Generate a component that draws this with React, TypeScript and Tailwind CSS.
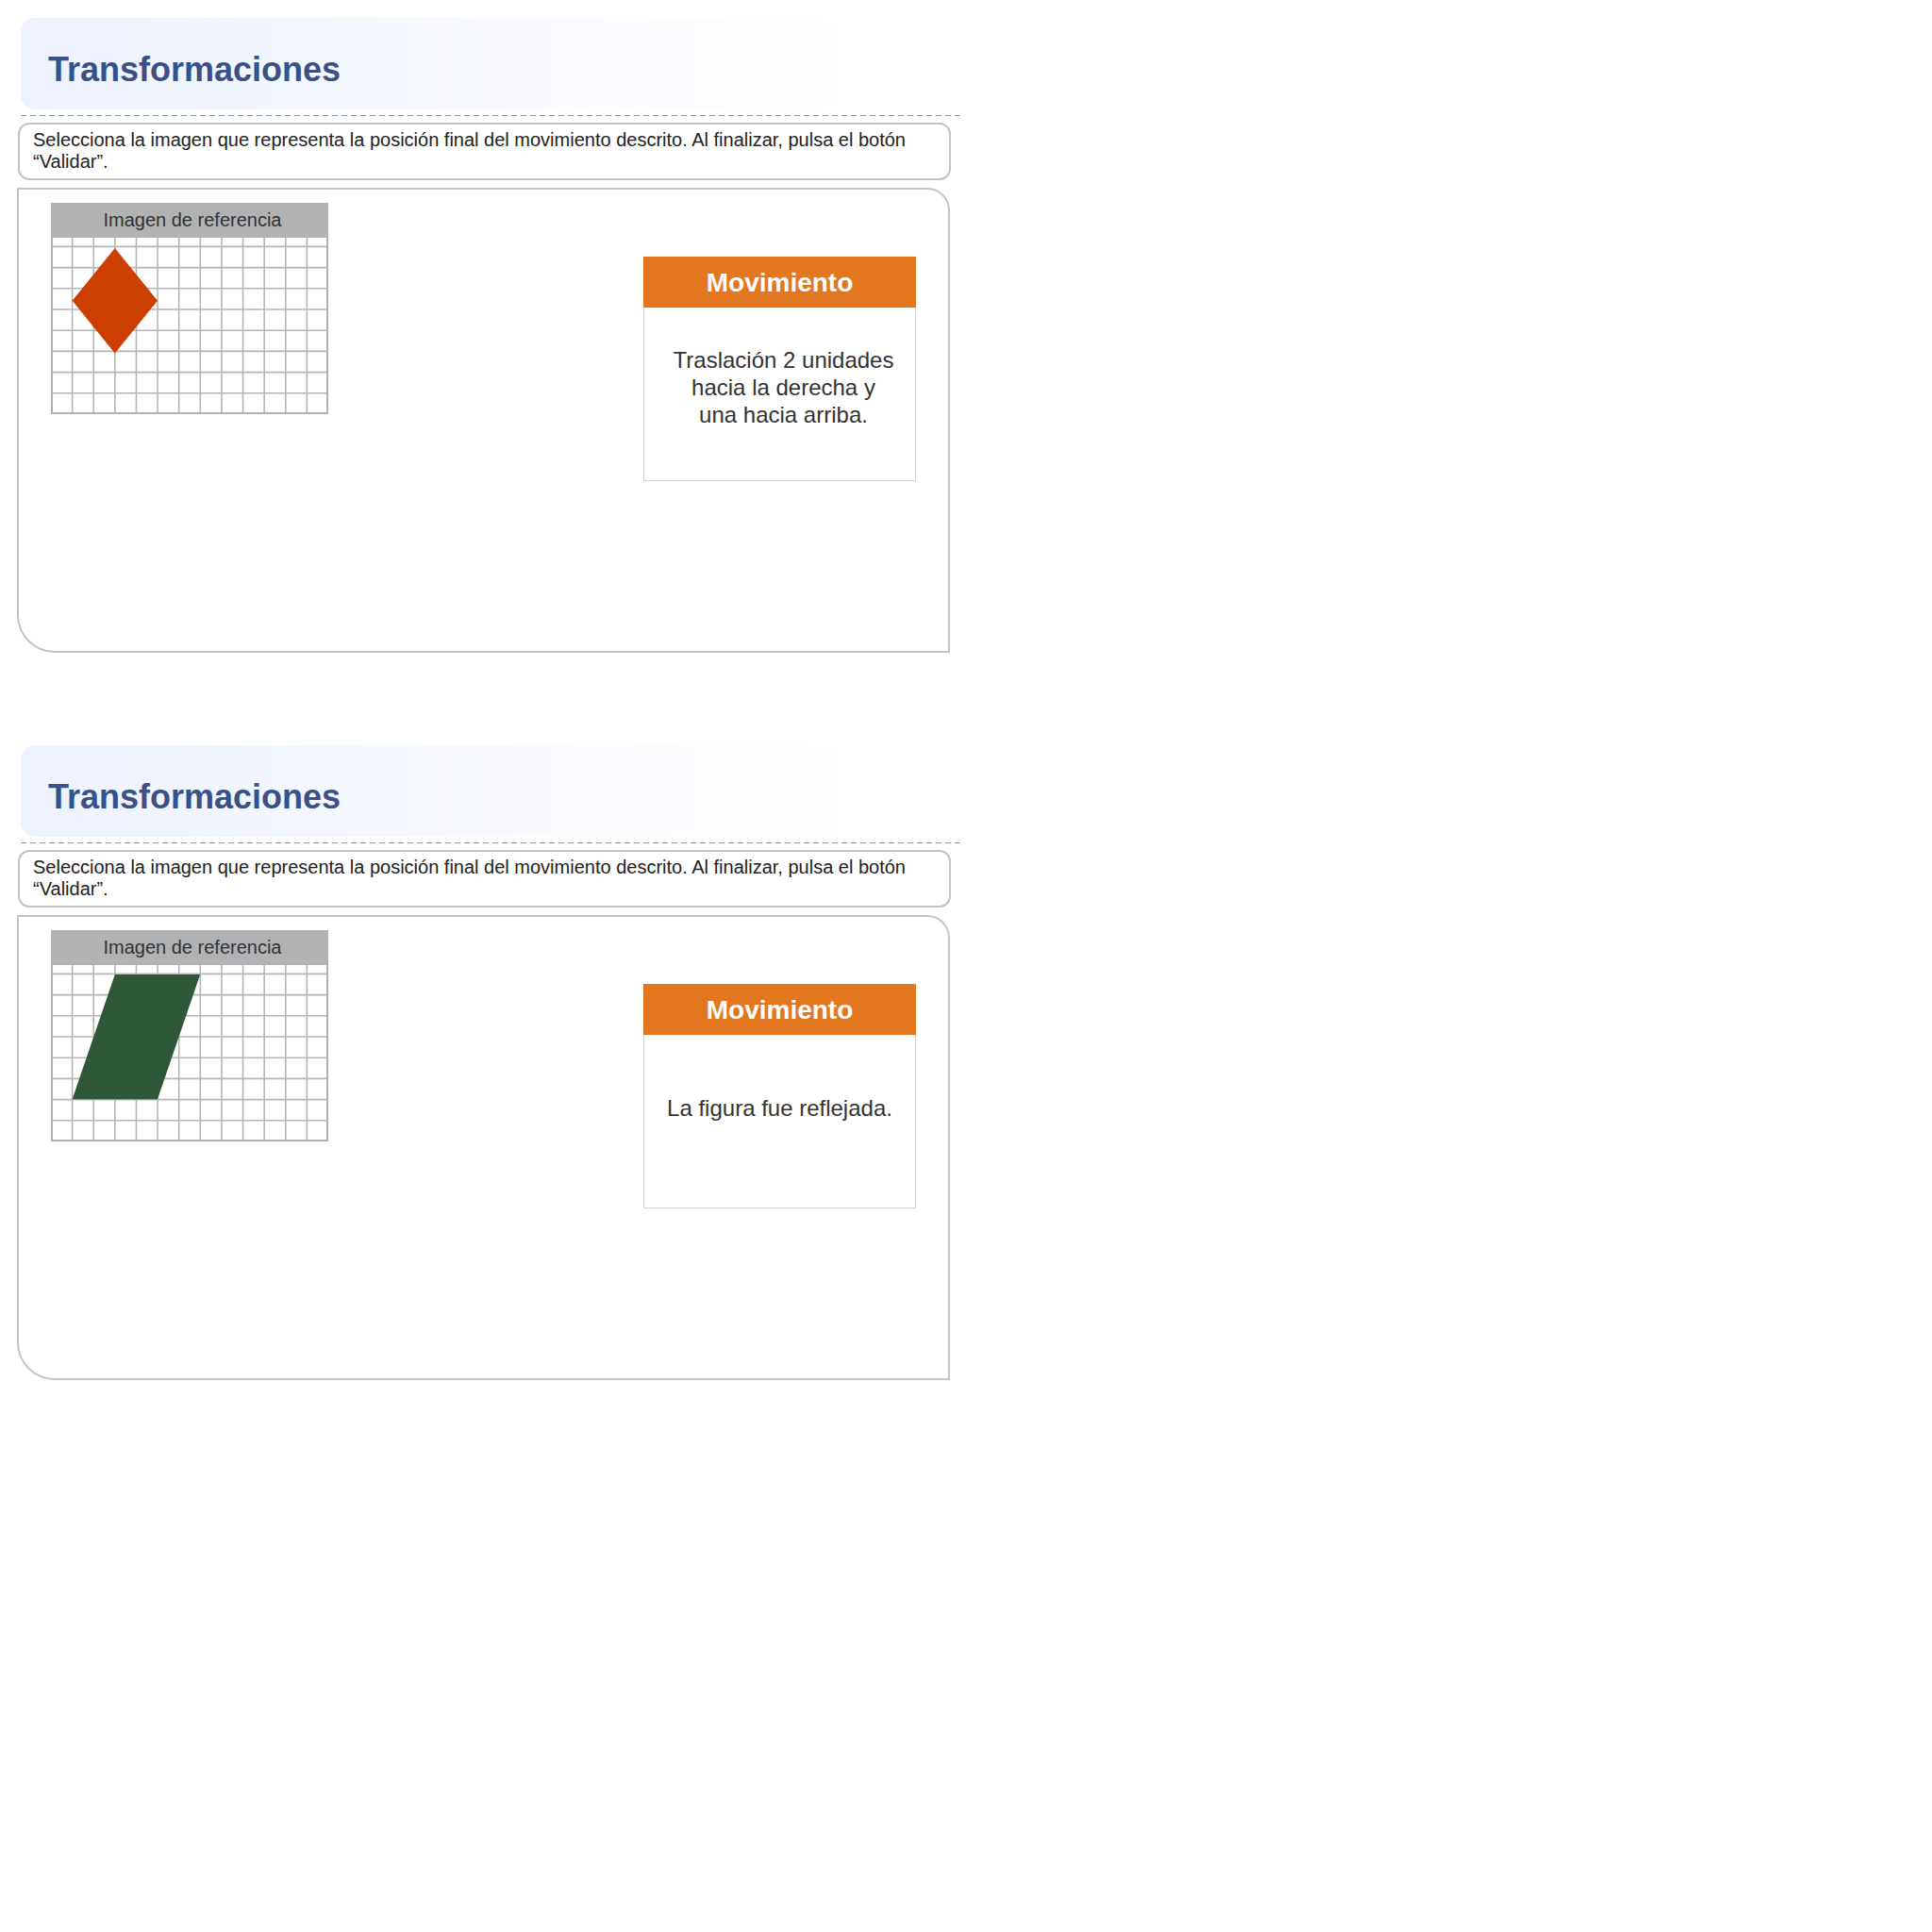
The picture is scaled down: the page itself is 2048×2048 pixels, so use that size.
import React from "react";

type Shape = "diamond" | "parallelogram";

interface Exercise {
  shape: Shape;
  lines: string[];
  padBottom: string;
}

const exercises: Exercise[] = [
  {
    shape: "diamond",
    lines: ["Traslación 2 unidades", "hacia la derecha y", "una hacia arriba."],
    padBottom: "pb-[15px] pl-[8px]",
  },
  {
    shape: "parallelogram",
    lines: ["La figura fue reflejada."],
    padBottom: "pb-[29px]",
  },
];

const COLS = 13;
const CELL_W = 294 / COLS;
const ROW_START = 9.4;
const CELL_H = 22.2;

function GridImage({ shape }: { shape: Shape }) {
  const cols = Array.from({ length: COLS - 1 }, (_, i) => (i + 1) * CELL_W);
  const rows = Array.from({ length: 8 }, (_, i) => ROW_START + i * CELL_H);
  return (
    <svg width="294" height="187" viewBox="0 0 294 187" className="block">
      <rect x="0" y="0" width="294" height="187" fill="#ffffff" />
      {cols.map((x) => (
        <line key={"c" + x} x1={x} y1={0} x2={x} y2={187} stroke="#b6b6b6" strokeWidth="1.6" />
      ))}
      {rows.map((y) => (
        <line key={"r" + y} x1={0} y1={y} x2={294} y2={y} stroke="#b6b6b6" strokeWidth="1.6" />
      ))}
      <path d="M1 0 V186 H293 V0" fill="none" stroke="#b0b0b0" strokeWidth="2" />
      {shape === "diamond" ? (
        <polygon points="67.8,11 113,66.8 67.8,122.6 22.6,66.8" fill="#cd3f00" />
      ) : (
        <polygon points="67.8,10 158.2,10 113,142.3 22.6,142.3" fill="#2f5838" />
      )}
    </svg>
  );
}

function ExerciseSection({ ex }: { ex: Exercise }) {
  return (
    <section className="pt-[19px] pb-[79px] pl-[18px]">
      <div className="w-[1002px]">
        <div className="ml-[4px] h-[97px] w-[946px] rounded-[15px] bg-linear-to-r from-[#edf2fe] to-white to-[92%] pl-[29px] pt-[37px]">
          <h1 className="text-[36px] leading-none font-bold text-[#3a5188]">Transformaciones</h1>
        </div>
        <div className="ml-[4px] mt-[6px] h-px w-[998px] bg-[repeating-linear-gradient(to_right,#8e99a8_0px,#8e99a8_6px,transparent_6px,transparent_10px)]" />

        <div className="ml-[1px] mt-[7px] h-[61px] w-[989px] rounded-[12px] border-2 border-[#c2c2c2] pl-[14px] pt-[5px] text-[20px] leading-[23px] text-[#222]">
          Selecciona la imagen que representa la posición final del movimiento descrito. Al finalizar, pulsa el botón “Validar”.
        </div>

        <div className="mt-[8px] flex h-[493px] w-[989px] items-start justify-between rounded-tr-[24px] rounded-bl-[40px] border-2 border-[#c4c4c4] px-[34px] pt-[14px]">
          <div className="w-[294px]">
            <div className="h-[37px] bg-[#b1b2b4] pl-[6px] text-center text-[20px] leading-[37px] text-[#333]">
              Imagen de referencia
            </div>
            <GridImage shape={ex.shape} />
          </div>

          <div className="mt-[57px] w-[289px]">
            <div className="flex h-[54px] items-center justify-center bg-[#e2771f] pt-[2px] text-[28px] font-bold text-white">
              Movimiento
            </div>
            <div
              className={
                "flex h-[184px] flex-col items-center justify-center border border-t-0 border-[#d2d2d2] text-center text-[24px] leading-[29px] text-[#333] " +
                ex.padBottom
              }
            >
              {ex.lines.map((l) => (
                <span key={l}>{l}</span>
              ))}
            </div>
          </div>
        </div>
      </div>
    </section>
  );
}

export default function App() {
  return (
    <div className="min-h-[2048px] w-full bg-white font-['Liberation_Sans',Arial,sans-serif]">
      {exercises.map((ex) => (
        <ExerciseSection key={ex.shape} ex={ex} />
      ))}
    </div>
  );
}
